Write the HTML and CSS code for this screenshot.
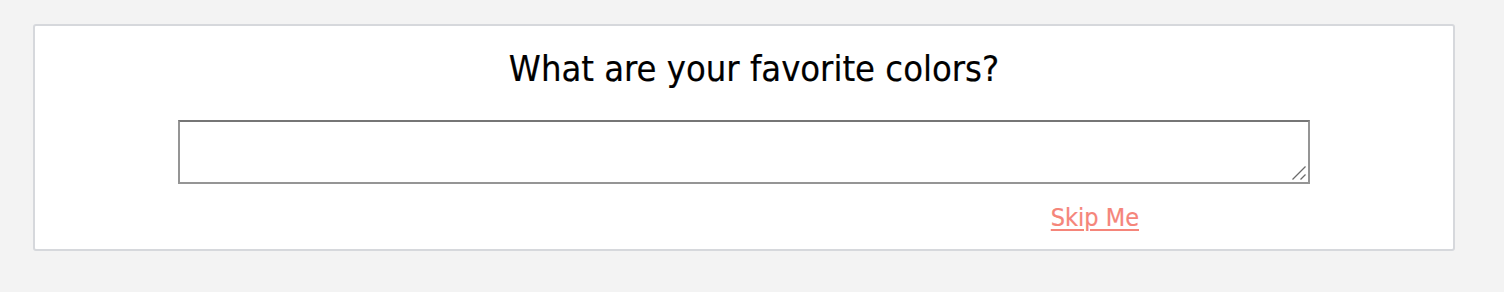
FILE: index.html
```html
<!DOCTYPE html>
<html>
<head>
<meta charset="utf-8">
<link rel="stylesheet" href="styles.css">
</head>
<body>
<div class="page">
  <div class="card">
    <h1 class="question">What are your favorite colors?</h1>
    <div class="field">
      <div class="answer-wrap">
        <textarea class="answer"></textarea>
        <svg class="grip" width="16" height="16" viewBox="0 0 16 16">
          <line x1="1.5" y1="14.5" x2="14.5" y2="1.5" stroke="#6b6b6b" stroke-width="1.3"/>
          <line x1="9.5" y1="14.5" x2="14.5" y2="9.5" stroke="#6b6b6b" stroke-width="1.3"/>
        </svg>
      </div>
    </div>
    <div class="actions">
      <a class="skip" href="#">Skip Me</a>
    </div>
  </div>
</div>
</body>
</html>
```

FILE: styles.css
```css
html, body {
  margin: 0;
  padding: 0;
  background: #f3f3f3;
}
body {
  font-family: "DejaVu Sans Condensed", "DejaVu Sans", Verdana, sans-serif;
  font-stretch: condensed;
}
.page {
  padding: 24px 0 0 33px;
  width: 1422px;
}
.card {
  box-sizing: border-box;
  width: 1422px;
  height: 227px;
  background: #fff;
  border: 2px solid #d6d8dc;
  border-radius: 3px;
  padding-top: 19px;
}
.question {
  margin: 0 0 0 20px;
  text-align: center;
  font-weight: normal;
  font-size: 36px;
  line-height: 48px;
  color: #000;
  -webkit-text-stroke: 0.2px #000;
}
.field {
  display: flex;
  justify-content: center;
  margin-top: 27px;
}
.answer-wrap {
  position: relative;
  width: 1132px;
  height: 64px;
}
.answer {
  display: block;
  box-sizing: border-box;
  width: 1132px;
  height: 64px;
  border: 2px solid #959595;
  border-top-color: #767676;
  background: #fff;
  margin: 0;
  padding: 2px;
  resize: none;
  outline: none;
}
.grip {
  position: absolute;
  right: 3px;
  bottom: 3px;
}
.actions {
  display: flex;
  justify-content: flex-end;
  padding-right: 314px;
  margin-top: 18px;
}
.skip {
  font-size: 25px;
  color: #f5857a;
  text-decoration: underline;
  text-decoration-thickness: 2px;
  text-underline-offset: 3px;
  line-height: 32px;
  -webkit-text-stroke: 0.2px #f5857a;
}
```
